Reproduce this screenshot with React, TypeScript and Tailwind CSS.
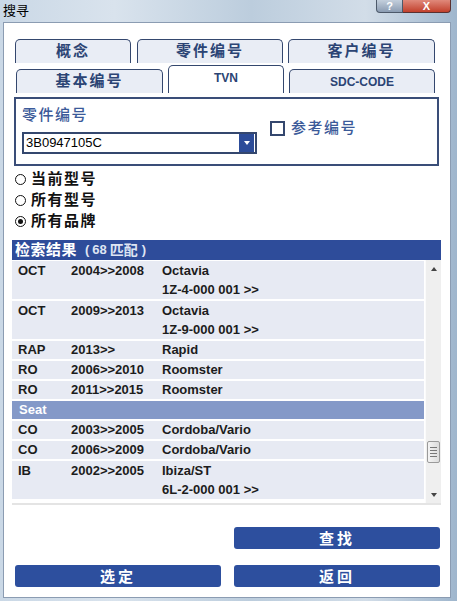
import React from 'react';

type Row =
    | { brand: string }
    | { code: string; years: string; name: string; sub?: string };

const results: Row[] = [
    { code: 'OCT', years: '2004>>2008', name: 'Octavia', sub: '1Z-4-000 001 >>' },
    { code: 'OCT', years: '2009>>2013', name: 'Octavia', sub: '1Z-9-000 001 >>' },
    { code: 'RAP', years: '2013>>', name: 'Rapid' },
    { code: 'RO', years: '2006>>2010', name: 'Roomster' },
    { code: 'RO', years: '2011>>2015', name: 'Roomster' },
    { brand: 'Seat' },
    { code: 'CO', years: '2003>>2005', name: 'Cordoba/Vario' },
    { code: 'CO', years: '2006>>2009', name: 'Cordoba/Vario' },
    { code: 'IB', years: '2002>>2005', name: 'Ibiza/ST', sub: '6L-2-000 001 >>' },
];

const scopes = [
    { label: '当前型号', checked: false },
    { label: '所有型号', checked: false },
    { label: '所有品牌', checked: true },
];

const Tab: React.FC<{ label: string; w: string; active?: boolean; latin?: boolean }> = ({ label, w, active, latin }) => (
    <div
        className={`${w} ${active ? 'h-[28px] bg-white pb-[4px]' : 'h-[24px] bg-[#e9edf5]'} flex items-center justify-center rounded-t-[5px] border border-b-0 border-[#34476e] text-[#2b4474] font-bold ${latin ? 'text-[12px]' : 'text-[15px] tracking-[2px]'}`}
    >
        {label}
    </div>
);

const Radio: React.FC<{ checked: boolean }> = ({ checked }) => (
    <span className="w-[11px] h-[11px] rounded-full border-[1.5px] border-[#111] flex items-center justify-center">
        {checked && <span className="w-[5px] h-[5px] rounded-full bg-[#111]" />}
    </span>
);

const BlueButton: React.FC<{ label: string }> = ({ label }) => (
    <button className="w-[206px] h-[22px] rounded-[3px] bg-[#2d4f9e] text-white font-bold text-[15px] tracking-[3px] leading-none flex items-center justify-center">
        {label}
    </button>
);

const App: React.FC = () => {
    return (
        <div className="w-[457px] h-[601px] flex flex-col overflow-hidden bg-[linear-gradient(90deg,#cad8e6,#d9e3ed_25%,#bccddd_55%,#d2dde8_80%,#9fb6cd)] font-['Liberation_Sans','Noto_Sans_CJK_SC',sans-serif] text-[#1a1a1a]">
            {/* title bar */}
            <div className="h-[22px] flex items-start justify-between">
                <span className="ml-[3px] mt-[4px] text-[13px] leading-[14px] text-black">搜寻</span>
                <div className="flex mr-[6px] h-[13px]">
                    <div className="w-[27px] h-full rounded-bl-[4px] border border-t-0 border-[#4c596a] bg-[linear-gradient(#c3cfdc,#8b9cb2)] text-white text-[11px] font-bold leading-[12px] text-center">?</div>
                    <div className="w-[48px] h-full rounded-br-[4px] border border-t-0 border-l-0 border-[#5a3030] bg-[linear-gradient(#e0897b,#c2402c)] text-white text-[11px] font-bold leading-[12px] text-center">X</div>
                </div>
            </div>

            {/* client area */}
            <div className="ml-[3px] mr-[6px] h-[576px] bg-white border border-[#8b9cb2] flex flex-col">
                <div className="ml-[11px] mt-[16px] flex flex-col gap-[2px]">
                    <div className="flex items-end">
                        <Tab label="概念" w="w-[116px]" />
                        <div className="ml-[6px]">
                            <Tab label="零件编号" w="w-[146px]" />
                        </div>
                        <div className="ml-[5px]">
                            <Tab label="客户编号" w="w-[147px]" />
                        </div>
                    </div>
                    <div className="ml-px flex gap-[5px] items-end h-[28px]">
                        <Tab label="基本编号" w="w-[147px]" />
                        <Tab label="TVN" w="w-[116px]" active latin />
                        <Tab label="SDC-CODE" w="w-[146px]" latin />
                    </div>
                </div>

                {/* part number group */}
                <div className="ml-[10px] mt-[4px] w-[425px] h-[69px] border-2 border-[#3a4e78] flex pl-[6px] pt-[7px]">
                    <div className="flex flex-col">
                        <span className="text-[15px] leading-[18px] tracking-[1.5px] text-[#3b5a99] font-medium">零件编号</span>
                        <div className="mt-[8px] w-[235px] h-[22px] border-2 border-[#34476e] flex items-center justify-between">
                            <span className="ml-[2px] text-[13px] text-black">3B0947105C</span>
                            <span className="mr-px w-[15px] h-[18px] bg-[#2c4c99] flex items-center justify-center">
                                <span className="border-x-[3.5px] border-x-transparent border-t-[4px] border-t-white" />
                            </span>
                        </div>
                    </div>
                    <div className="ml-[13px] mt-[13px] flex items-center h-[18px]">
                        <span className="w-[15px] h-[15px] border-2 border-[#34476e]" />
                        <span className="ml-[6px] text-[15px] tracking-[1.5px] text-[#3b5a99] font-medium">参考编号</span>
                    </div>
                </div>

                {/* search scope */}
                <div className="ml-[11px] mt-[3px] flex flex-col">
                    {scopes.map((s) => (
                        <div key={s.label} className="h-[21px] flex items-center">
                            <Radio checked={s.checked} />
                            <span className="ml-[5px] text-[15px] font-bold tracking-[1.5px] text-[#111]">{s.label}</span>
                        </div>
                    ))}
                </div>

                {/* results */}
                <div className="ml-[8px] mt-[8px] w-[429px] flex flex-col">
                    <div className="h-[20px] bg-[#2e4c9a] text-white font-bold flex items-center pl-[3px]">
                        <span className="text-[15px] tracking-[0.5px]">检索结果</span>
                        <span className="ml-[8px] text-[13px] text-[#dfe5f3]">(</span>
                        <span className="ml-[3px] text-[13px] text-[#dfe5f3]">68</span>
                        <span className="ml-[3px] text-[14px] text-[#dfe5f3]">匹配</span>
                        <span className="ml-[4px] text-[13px] text-[#dfe5f3]">)</span>
                    </div>
                    <div className="h-[243px] flex bg-white">
                        <div className="w-[412px] flex flex-col gap-[2px] pt-px">
                            {results.map((r, i) =>
                                'brand' in r ? (
                                    <div key={i} className="h-[18px] bg-[#8499c8] text-white text-[13px] font-bold leading-[18px] pl-[7px]">
                                        {r.brand}
                                    </div>
                                ) : (
                                    <div key={i} className={`${r.sub ? 'h-[38px]' : 'h-[18px]'} bg-[#e7eaf3] flex text-[13px] font-bold text-[#1c1c1c]`}>
                                        <span className={`w-[59px] pl-[6px] ${r.sub ? 'leading-[20px]' : 'leading-[18px]'}`}>{r.code}</span>
                                        <span className={`w-[91px] ${r.sub ? 'leading-[20px]' : 'leading-[18px]'}`}>{r.years}</span>
                                        <div className="flex flex-col">
                                            <span className={r.sub ? 'leading-[20px]' : 'leading-[18px]'}>{r.name}</span>
                                            {r.sub && <span className="leading-[18px]">{r.sub}</span>}
                                        </div>
                                    </div>
                                )
                            )}
                        </div>
                        {/* vertical scrollbar */}
                        <div className="ml-px w-[16px] bg-[#efefef] border-l border-[#fbfbfb] flex flex-col items-center">
                            <span className="mt-[7px] border-x-[3.5px] border-x-transparent border-b-[4px] border-b-[#444]" />
                            <div className="mt-[170px] w-[13px] h-[22px] rounded-[2px] border border-[#9a9a9a] bg-[linear-gradient(90deg,#f4f4f4,#dcdcdc)] flex flex-col items-center justify-center gap-[2px]">
                                <span className="w-[7px] h-px bg-[#777]" />
                                <span className="w-[7px] h-px bg-[#777]" />
                                <span className="w-[7px] h-px bg-[#777]" />
                                <span className="w-[7px] h-px bg-[#777]" />
                            </div>
                            <span className="mt-[30px] border-x-[3.5px] border-x-transparent border-t-[4px] border-t-[#444]" />
                        </div>
                    </div>
                    <div className="h-[2px] bg-[#e4e4e4]" />
                </div>

                {/* actions */}
                <div className="mt-[22px] ml-[230px]">
                    <BlueButton label="查找" />
                </div>
                <div className="mt-[16px] ml-[11px] flex gap-[13px]">
                    <BlueButton label="选定" />
                    <BlueButton label="返回" />
                </div>
            </div>
        </div>
    );
};

export default App;
